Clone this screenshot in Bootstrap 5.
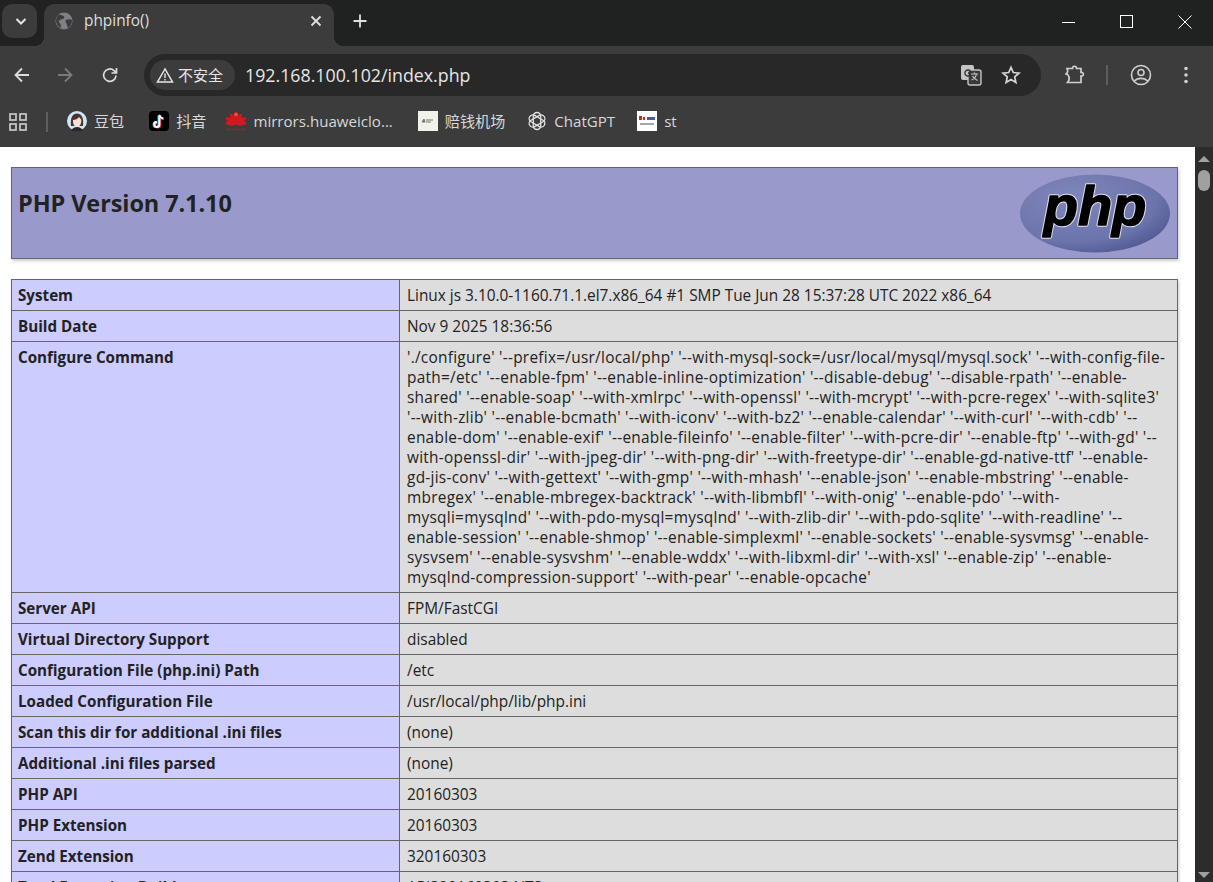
<!DOCTYPE html>
<html lang="zh-CN">
<head>
  <meta charset="UTF-8" />
  <meta name="viewport" content="width=device-width, initial-scale=1" />
  <title>phpinfo()</title>
  <link href="https://cdn.jsdelivr.net/npm/bootstrap@5.3.2/dist/css/bootstrap.min.css" rel="stylesheet">
  <style>
    html, body { height: 100%; overflow: hidden; }
    body {
      background: #fff;
      font-family: "Open Sans", "Noto Sans CJK SC", sans-serif;
    }
    .browser-shell { height: 882px; }
    .tab-strip { height: 46px; background: #202221; padding-left: 2px; padding-top: 4px; }
    .tab-search { width: 35px; height: 34px; background: #3c3c3c; border-radius: 10px; margin-right: 7px; padding-left: 2px; }
    .active-tab {
      width: 290px; height: 42px; background: #3c3c3c; border-radius: 10px 10px 0 0;
      padding: 0 8px 8px 11px; color: #dedede; font-size: 15.4px; position: relative;
    }
    .active-tab::before, .active-tab::after {
      content: ""; position: absolute; bottom: 0; width: 10px; height: 10px;
    }
    .active-tab::before { left: -10px; background: radial-gradient(circle at 0 0, transparent 10px, #3c3c3c 10.5px); }
    .active-tab::after { right: -10px; background: radial-gradient(circle at 100% 0, transparent 10px, #3c3c3c 10.5px); }
    .new-tab { width: 38px; height: 34px; margin-left: 7px; }
    .win-btn { width: 58px; height: 42px; margin-top: -3px; }
    .win-group { margin-right: -1px; }
    .address-row { height: 54px; background: #3c3c3c; padding: 4px 12px 0 0; }
    .nav-ico { width: 44px; height: 40px; }
    .nav-ico:first-child { width: 43px; }
    .nav-ico:nth-child(3) { width: 46px; }
    .omnibox {
      width: 897px; height: 42px; background: #282828; border-radius: 21px; margin-left: 11px;
      padding: 0 10px 0 6px; color: #e6e6e6;
    }
    .security-chip {
      height: 30px; width: 85px; border-radius: 15px; background: #3c3c3c; color: #e6e6e6;
      font-size: 15px; padding-left: 6px; gap: 4px;
    }
    .url-text { font-size: 17.8px; margin-left: 10px; }
    .omni-star { margin-left: 19px; margin-right: 10px; }
    .ext-ico { margin-left: 24px; }
    .tool-sep { width: 2px; height: 20px; background: #5e5e5e; margin: 0 22px 0 21px; }
    .menu-dots { margin-right: 13px; }
    .bookmark-row { height: 47px; background: #3c3c3c; color: #d8d8d8; font-size: 15.1px; padding-left: 9px; padding-bottom: 4px; }
    .bm-sep { width: 2px; height: 20px; background: #5e5e5e; margin: 0 19px; }
    .bm-entry { gap: 7px; margin-right: 22px; white-space: nowrap; }
    .bm-entry:nth-of-type(2) { margin-right: 25px; }
    .bm-entry:nth-of-type(3) { margin-right: 20px; }
    .bm-entry:nth-of-type(4) { margin-right: 25px; }
    .bm-fav { width: 20px; height: 20px; flex: none; }
    .page-pane { height: 735px; overflow: hidden; }
    .page-body { flex: 1 1 auto; padding: 20px 17px 0 11px; overflow: hidden; color: #222; }
    .php-banner {
      height: 92px; background: #9999cc; border: 1px solid #666; box-shadow: 1px 2px 3px #ccc;
      padding: 0 6px 0 6px; margin-bottom: 20px;
    }
    .php-banner h1 { font-size: 23.5px; font-weight: 700; margin: 19px 0 0; line-height: 32px; color: #222; letter-spacing: -.1px; }
    .php-logo { margin-top: 6px; }
    .info-grid { border-collapse: collapse; width: 1167px; table-layout: fixed; font-size: 15.4px; line-height: 20px; box-shadow: 1px 2px 3px #ccc; }
    .info-grid td { border: 1px solid #666; padding: 5px 6px; vertical-align: top; white-space: nowrap; color: #222; }
    .info-key { width: 388px; background: #ccccff; font-weight: 700; font-size: 15.2px; }
    .info-grid td.info-val { background: #dddddd; padding: 6px 6px 4px 7px; }
    .config-val { letter-spacing: .27px; }
    .scroll-rail { width: 18px; background: #2c2c2c; flex: none; }
    .scroll-thumb { width: 12px; height: 21px; background: #a0a0a0; border-radius: 6px; margin: 8px auto 0; }
    .scroll-up { width: 0; height: 0; border: 6.5px solid transparent; border-top: 0; border-bottom: 6px solid #a0a0a0; margin: 9px auto 0; }
    .scroll-down { width: 0; height: 0; border: 6.5px solid transparent; border-bottom: 0; border-top: 6px solid #a0a0a0; margin: auto auto 4px; }
  </style>
</head>
<body>
<div class="browser-shell d-flex flex-column">

  <!-- tab strip -->
  <div class="tab-strip d-flex flex-shrink-0">
    <div class="tab-search d-flex align-items-center justify-content-center">
      <svg width="14" height="14" viewBox="0 0 14 14"><path d="M2.500 5l4.500 4.500L11.500 5" fill="none" stroke="#e4e4e4" stroke-width="2"/></svg>
    </div>
    <div class="active-tab d-flex align-items-center">
      <svg width="18" height="18" viewBox="0 0 18 18" class="me-2">
        <circle cx="9" cy="9" r="8.500" fill="#7d8085"/>
        <path d="M4 2.500c2 1 4 .5 5 2s-1 2.500-3 3-3 2-1.500 3.500 1.500 2.500 1 5C2.500 14 0 10 1.500 6 2 4.500 3 3.500 4 2.500zM11 8c2-1 5-1 6 0 .3 3-1.500 6.500-4 8-1-1.500-.5-3-1.500-4.500S10 9 11 8z" fill="#3c3c3c"/>
      </svg>
      <span style="margin-left:3px">phpinfo()</span>
      <svg class="ms-auto me-1" width="12" height="12" viewBox="0 0 12 12"><path d="M1.500 1.500l9 9m0-9l-9 9" stroke="#e0e0e0" stroke-width="1.800" fill="none"/></svg>
    </div>
    <div class="new-tab d-flex align-items-center justify-content-center">
      <svg width="14" height="14" viewBox="0 0 14 14"><path d="M7 .5v13M.5 7h13" stroke="#e0e0e0" stroke-width="1.800" fill="none"/></svg>
    </div>
    <div class="win-group ms-auto d-flex">
      <div class="win-btn d-flex align-items-center justify-content-center">
        <svg width="14" height="14" viewBox="0 0 14 14"><path d="M0 7.500h13" stroke="#fff" stroke-width="1"/></svg>
      </div>
      <div class="win-btn d-flex align-items-center justify-content-center">
        <svg width="14" height="14" viewBox="0 0 14 14"><rect x=".5" y=".5" width="12" height="12" fill="none" stroke="#fff"/></svg>
      </div>
      <div class="win-btn d-flex align-items-center justify-content-center">
        <svg width="14" height="14" viewBox="0 0 14 14"><path d="M.5.5l13 13m0-13l-13 13" stroke="#fff" stroke-width="1" fill="none"/></svg>
      </div>
    </div>
  </div>

  <!-- address row -->
  <div class="address-row d-flex align-items-center flex-shrink-0">
    <div class="nav-ico d-flex align-items-center justify-content-center">
      <svg width="18" height="18" viewBox="0 0 18 18"><path d="M16 9H2.500M9 2.500L2.500 9 9 15.500" fill="none" stroke="#dcdcdc" stroke-width="1.800"/></svg>
    </div>
    <div class="nav-ico d-flex align-items-center justify-content-center">
      <svg width="18" height="18" viewBox="0 0 18 18"><path d="M2 9h13.500M9 2.500L15.500 9 9 15.500" fill="none" stroke="#7a7a7a" stroke-width="1.800"/></svg>
    </div>
    <div class="nav-ico d-flex align-items-center justify-content-center">
      <svg width="18" height="18" viewBox="0 0 18 18"><path d="M15 9.500A6.200 6.200 0 1 1 13 4.600L15.200 6.600M15.500 2v5h-5" fill="none" stroke="#dcdcdc" stroke-width="1.700"/></svg>
    </div>
    <div class="omnibox d-flex align-items-center flex-shrink-0">
      <div class="security-chip d-flex align-items-center">
        <svg width="18" height="17" viewBox="0 0 18 17"><path d="M9 2L1.500 15h15z" fill="none" stroke="#e6e6e6" stroke-width="1.500"/><path d="M9 6.500v4.500M9 12v1.500" stroke="#e6e6e6" stroke-width="1.400"/></svg>
        <span>不安全</span>
      </div>
      <span class="url-text">192.168.100.102/index.php</span>
      <svg class="ms-auto" width="22" height="22" viewBox="0 0 22 22">
        <rect x="1" y="1" width="13" height="15" rx="2" fill="#c4c4c4"/>
        <rect x="8" y="6" width="13" height="15" rx="2" fill="#3a3a3a" stroke="#c4c4c4" stroke-width="1.400"/>
        <path d="M10.500 7.500A3 3 0 1 0 10.500 10.500V9H8" fill="none" stroke="#333" stroke-width="1.400"/>
        <path d="M11 10h7M14.500 8.500v1.500M16.500 10c-.5 2.500-2.500 5-5 6M12.500 12c1 2 3 3.500 5 4.500" fill="none" stroke="#c4c4c4" stroke-width="1.200"/>
      </svg>
      <svg class="omni-star" width="20" height="20" viewBox="0 0 20 20"><path d="M10 2.300l2.300 5.200 5.700.6-4.300 3.800 1.200 5.600L10 14.600l-4.900 2.900 1.200-5.600L2 8.100l5.700-.6z" fill="none" stroke="#d4d4d4" stroke-width="1.700"/></svg>
    </div>
    <div class="d-flex align-items-center flex-grow-1">
      <svg class="ext-ico" width="20" height="20" viewBox="0 0 20 20"><path d="M2 3.500h5.500c0-3 4-3 4 0H16v4c3.200-.5 3.200 4 0 3.500v6.500H2.500c2-2.500 2-5.500.5-7.500-.5-.8-1-1-2-1 2-1.500 2-3.500 1-5.500z" fill="none" stroke="#cfcfcf" stroke-width="1.700"/></svg>
      <div class="tool-sep"></div>
      <svg width="22" height="22" viewBox="0 0 22 22"><circle cx="11" cy="11" r="9.500" fill="none" stroke="#d0d0d0" stroke-width="1.600"/><circle cx="11" cy="8.500" r="3" fill="none" stroke="#d0d0d0" stroke-width="1.600"/><path d="M4.500 17c3-3.500 10-3.500 13 0" fill="none" stroke="#d0d0d0" stroke-width="1.600"/></svg>
      <svg class="menu-dots ms-auto" width="4" height="18" viewBox="0 0 4 18"><circle cx="2" cy="2.500" r="1.800" fill="#d0d0d0"/><circle cx="2" cy="9" r="1.800" fill="#d0d0d0"/><circle cx="2" cy="15.500" r="1.800" fill="#d0d0d0"/></svg>
    </div>
  </div>

  <!-- bookmarks -->
  <div class="bookmark-row d-flex align-items-center flex-shrink-0">
    <svg width="18" height="18" viewBox="0 0 18 18"><g fill="none" stroke="#c8c8c8" stroke-width="1.700"><rect x="1" y="1" width="6" height="6"/><rect x="11" y="1" width="6" height="6"/><rect x="1" y="11" width="6" height="6"/><rect x="11" y="11" width="6" height="6"/></g></svg>
    <div class="bm-sep"></div>
    <div class="bm-entry d-flex align-items-center">
      <svg class="bm-fav" viewBox="0 0 20 20"><circle cx="10" cy="10" r="10" fill="#cfe6f7"/><path d="M4 15C3 6 6 2.500 10 2.500S17 6 16 15z" fill="#4a322b"/><path d="M6 9c2 0 5-1 6-3 1 1 2 2 2.300 3 .2 4-1.800 7-4.300 7S5.700 13 6 9z" fill="#f8dfd3"/><path d="M4.500 20c.5-3 3-4 5.500-4s5 1 5.500 4z" fill="#26262c"/></svg>
      <span>豆包</span>
    </div>
    <div class="bm-entry d-flex align-items-center">
      <svg class="bm-fav" viewBox="0 0 20 20"><rect width="20" height="20" rx="4" fill="#000"/><path d="M9.600 4.500v9a2.500 2.500 0 1 1-2.500-2.500" fill="none" stroke="#25f4ee" stroke-width="2"/><path d="M11.200 4.500v9.500a2.500 2.500 0 1 1-2.500-2.500M11.200 4.500c.3 2 1.700 3.300 3.800 3.500" fill="none" stroke="#fe2c55" stroke-width="2"/><path d="M10.400 3.800v9.700a2.500 2.500 0 1 1-2.500-2.500M10.400 3.800c.3 2 1.700 3.300 3.800 3.500" fill="none" stroke="#fff" stroke-width="1.800"/></svg>
      <span>抖音</span>
    </div>
    <div class="bm-entry d-flex align-items-center">
      <svg class="bm-fav" viewBox="0 0 20 20"><g fill="#d0181e"><ellipse cx="10" cy="5.500" rx="2.300" ry="5"/><ellipse cx="10" cy="7" rx="2.300" ry="5.500" transform="rotate(-28 10 13)"/><ellipse cx="10" cy="7" rx="2.300" ry="5.500" transform="rotate(28 10 13)"/><ellipse cx="10" cy="7" rx="2.300" ry="6" transform="rotate(-58 10 13)"/><ellipse cx="10" cy="7" rx="2.300" ry="6" transform="rotate(58 10 13)"/><ellipse cx="10" cy="7.500" rx="2" ry="5.500" transform="rotate(-84 10 13)"/><ellipse cx="10" cy="7.500" rx="2" ry="5.500" transform="rotate(84 10 13)"/></g><circle cx="10" cy="3.500" r="1.800" fill="#e85a40"/><rect x="0" y="17.500" width="20" height="2" fill="#5a3a3a"/></svg>
      <span>mirrors.huaweiclo...</span>
    </div>
    <div class="bm-entry d-flex align-items-center">
      <svg class="bm-fav" viewBox="0 0 20 20"><rect width="20" height="20" fill="#f1f0ea"/><path d="M4 11l2-3 1 3zM8 9h7M8 11h5" stroke="#6b7a6a" stroke-width="1" fill="#6b7a6a"/></svg>
      <span>赔钱机场</span>
    </div>
    <div class="bm-entry d-flex align-items-center">
      <svg class="bm-fav" viewBox="0 0 20 20"><g fill="none" stroke="#e2e2e2" stroke-width="1.300"><rect x="6.300" y="1.500" width="7.400" height="17" rx="3.700"/><rect x="6.300" y="1.500" width="7.400" height="17" rx="3.700" transform="rotate(60 10 10)"/><rect x="6.300" y="1.500" width="7.400" height="17" rx="3.700" transform="rotate(120 10 10)"/></g></svg>
      <span>ChatGPT</span>
    </div>
    <div class="bm-entry d-flex align-items-center">
      <svg class="bm-fav" viewBox="0 0 20 20"><rect width="20" height="20" fill="#fff"/><path d="M2 5h3v4H2zM6 6h2v3H6z" fill="#c8282a"/><path d="M10 6h8v3h-8z" fill="#4a5aa0"/><path d="M3 13h14" stroke="#8a8a8a" stroke-width="1.500"/></svg>
      <span>st</span>
    </div>
  </div>

  <!-- page -->
  <div class="page-pane d-flex flex-grow-1">
    <div class="page-body">
      <div class="php-banner d-flex justify-content-between">
        <h1>PHP Version 7.1.10</h1>
        <svg class="php-logo" width="152" height="80" viewBox="0 0 152 80" aria-label="PHP logo">
          <defs>
            <radialGradient id="phpGrad" cx="35%" cy="30%" r="80%">
              <stop offset="0" stop-color="#7f86bb"/><stop offset=".7" stop-color="#6c74ac"/><stop offset="1" stop-color="#4c5590"/>
            </radialGradient>
          </defs>
          <ellipse cx="76" cy="39.500" rx="75" ry="39" fill="url(#phpGrad)"/>
          <text x="76" y="51" text-anchor="middle" font-family="Liberation Sans" font-size="56" font-weight="700" font-style="italic" fill="#000" stroke="#dfe0ec" stroke-width="3.500" stroke-linejoin="round" aria-hidden="true">php</text>
          <text x="76" y="51" text-anchor="middle" font-family="Liberation Sans" font-size="56" font-weight="700" font-style="italic" fill="#000" stroke="#000" stroke-width="1.500" stroke-linejoin="round">php</text>
        </svg>
      </div>
      <table class="info-grid">
        <tbody>
          <tr><td class="info-key">System</td><td class="info-val">Linux js 3.10.0-1160.71.1.el7.x86_64 #1 SMP Tue Jun 28 15:37:28 UTC 2022 x86_64</td></tr>
          <tr><td class="info-key">Build Date</td><td class="info-val">Nov 9 2025 18:36:56</td></tr>
          <tr><td class="info-key">Configure Command</td><td class="info-val config-val">'./configure' '--prefix=/usr/local/php' '--with-mysql-sock=/usr/local/mysql/mysql.sock' '--with-config-file-<br>path=/etc' '--enable-fpm' '--enable-inline-optimization' '--disable-debug' '--disable-rpath' '--enable-<br>shared' '--enable-soap' '--with-xmlrpc' '--with-openssl' '--with-mcrypt' '--with-pcre-regex' '--with-sqlite3'<br>'--with-zlib' '--enable-bcmath' '--with-iconv' '--with-bz2' '--enable-calendar' '--with-curl' '--with-cdb' '--<br>enable-dom' '--enable-exif' '--enable-fileinfo' '--enable-filter' '--with-pcre-dir' '--enable-ftp' '--with-gd' '--<br>with-openssl-dir' '--with-jpeg-dir' '--with-png-dir' '--with-freetype-dir' '--enable-gd-native-ttf' '--enable-<br>gd-jis-conv' '--with-gettext' '--with-gmp' '--with-mhash' '--enable-json' '--enable-mbstring' '--enable-<br>mbregex' '--enable-mbregex-backtrack' '--with-libmbfl' '--with-onig' '--enable-pdo' '--with-<br>mysqli=mysqlnd' '--with-pdo-mysql=mysqlnd' '--with-zlib-dir' '--with-pdo-sqlite' '--with-readline' '--<br>enable-session' '--enable-shmop' '--enable-simplexml' '--enable-sockets' '--enable-sysvmsg' '--enable-<br>sysvsem' '--enable-sysvshm' '--enable-wddx' '--with-libxml-dir' '--with-xsl' '--enable-zip' '--enable-<br>mysqlnd-compression-support' '--with-pear' '--enable-opcache'</td></tr>
          <tr><td class="info-key">Server API</td><td class="info-val">FPM/FastCGI</td></tr>
          <tr><td class="info-key">Virtual Directory Support</td><td class="info-val">disabled</td></tr>
          <tr><td class="info-key">Configuration File (php.ini) Path</td><td class="info-val">/etc</td></tr>
          <tr><td class="info-key">Loaded Configuration File</td><td class="info-val">/usr/local/php/lib/php.ini</td></tr>
          <tr><td class="info-key">Scan this dir for additional .ini files</td><td class="info-val">(none)</td></tr>
          <tr><td class="info-key">Additional .ini files parsed</td><td class="info-val">(none)</td></tr>
          <tr><td class="info-key">PHP API</td><td class="info-val">20160303</td></tr>
          <tr><td class="info-key">PHP Extension</td><td class="info-val">20160303</td></tr>
          <tr><td class="info-key">Zend Extension</td><td class="info-val">320160303</td></tr>
          <tr><td class="info-key">Zend Extension Build</td><td class="info-val">API320160303,NTS</td></tr>
        </tbody>
      </table>
    </div>
    <div class="scroll-rail d-flex flex-column">
      <div class="scroll-up"></div>
      <div class="scroll-thumb"></div>
      <div class="scroll-down"></div>
    </div>
  </div>
</div>
<script src="https://cdn.jsdelivr.net/npm/bootstrap@5.3.2/dist/js/bootstrap.bundle.min.js"></script>
</body>
</html>
